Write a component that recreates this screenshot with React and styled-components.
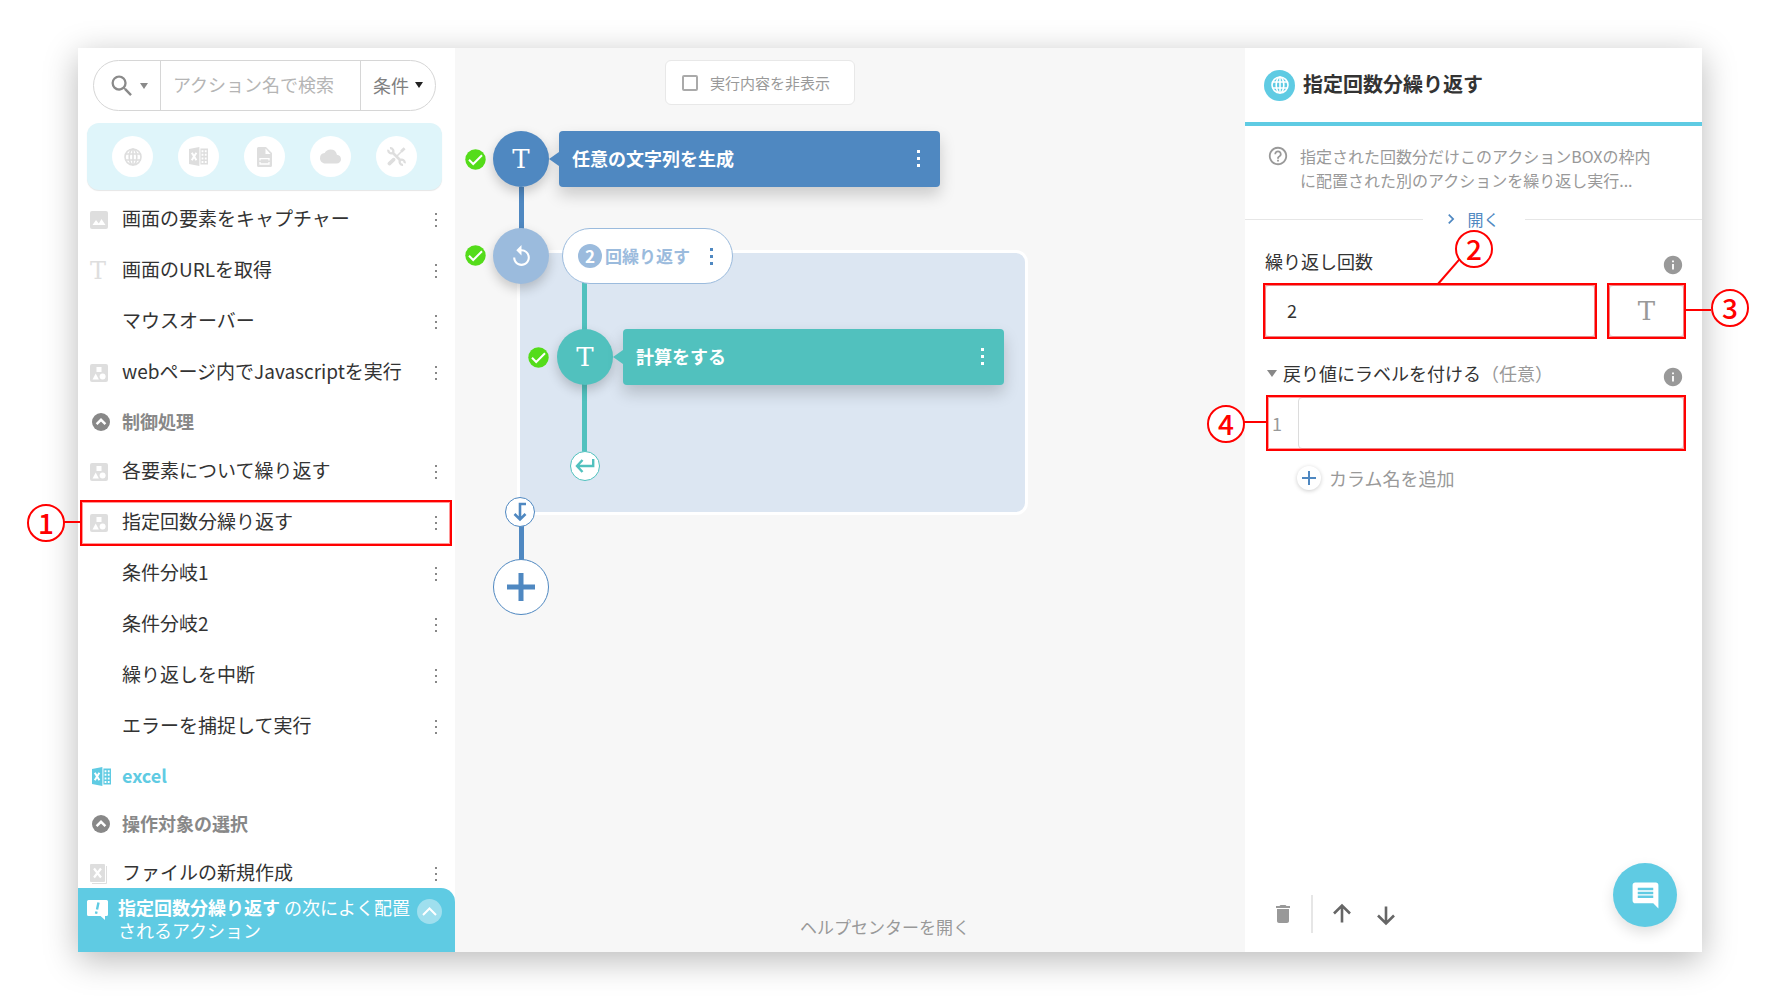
import React from "react";
import styled, { createGlobalStyle, css } from "styled-components";
import {
  MdSearch,
  MdCloud,
  MdReplay,
  MdComment,
  MdDelete,
  MdHelpOutline,
  MdInfo,
  MdChevronRight,
} from "react-icons/md";

const color = {
  cyan: "#5fcbe3",
  paleCyan: "#dff5fa",
  blue: "#4f88c1",
  lightBlue: "#9bbbdd",
  teal: "#51c1be",
  green: "#54dc1a",
  red: "#ff0000",
  text: "#333",
  gray: "#999",
  icon: "#dedede",
};

const GlobalStyle = createGlobalStyle`
  *, *::before, *::after { box-sizing: border-box; }
  body {
    margin: 0;
    background: #fff;
    color: ${color.text};
    font-family: "Noto Sans CJK JP", "Noto Sans", sans-serif;
    font-size: 18px;
    line-height: 24px;
  }
  button, input {
    margin: 0;
    padding: 0;
    border: 0;
    background: none;
    color: inherit;
    font: inherit;
  }
  button { cursor: pointer; }
  svg { display: block; flex: none; }
`;

/* ---------- shell ---------- */

const Page = styled.div`
  display: flex;
  min-height: 100vh;
  padding: 48px 77px 48px 78px;
`;

const Shell = styled.div`
  display: flex;
  flex: 1;
  background: #fff;
  box-shadow: 0 8px 32px rgba(0, 0, 0, 0.28);
`;

/* ---------- call-outs ---------- */

const Marked = styled.div`
  position: relative;
  ${(p) => p.$grow && "flex: 1;"}
`;

const Frame = styled.span`
  position: absolute;
  inset: ${(p) => p.$inset || "-2px"};
  border: 2px solid ${color.red};
  outline: 1px solid rgba(255, 0, 0, 0.4);
  outline-offset: -3px;
  pointer-events: none;
`;

const Badge = styled.span`
  position: absolute;
  left: ${(p) => p.$left}px;
  top: ${(p) => p.$top}px;
  z-index: 3;
  display: flex;
  align-items: center;
  justify-content: center;
  width: 38px;
  height: 38px;
  padding-bottom: 2px;
  border: 2px solid ${color.red};
  border-radius: 50%;
  background: #fff;
  color: ${color.red};
  font-size: 28px;
  font-weight: 500;
`;

const Lead = styled.span`
  position: absolute;
  left: ${(p) => p.$left}px;
  top: ${(p) => p.$top}px;
  width: ${(p) => p.$length}px;
  height: 2px;
  background: ${color.red};
  transform: rotate(${(p) => p.$angle || 0}deg);
  transform-origin: 0 50%;
`;

/* ---------- sidebar ---------- */

const Sidebar = styled.aside`
  position: relative;
  flex: none;
  width: 377px;
  padding-top: 12px;
`;

const SearchBar = styled.form`
  display: flex;
  height: 51px;
  margin: 0 19px 0 15px;
  border: 1px solid #d6d6d6;
  border-radius: 26px;
`;

const SearchKind = styled.button`
  display: flex;
  align-items: center;
  gap: 4px;
  width: 67px;
  padding-left: 14px;
  border-right: 1px solid #d6d6d6;
  color: #8a8a8a;
`;

const SearchInput = styled.input`
  flex: 1;
  min-width: 0;
  padding: 0 0 3px 12px;
  outline: none;
  &::placeholder { color: #b5b5b5; opacity: 1; }
`;

const Condition = styled.button`
  display: flex;
  align-items: center;
  gap: 6px;
  width: 75px;
  padding: 0 0 2px 12px;
  border-left: 1px solid #d6d6d6;
  color: #808080;
`;

const Caret = styled.span`
  border: ${(p) => p.$half || 4}px solid transparent;
  border-top: ${(p) => (p.$half || 4) + 2}px solid ${(p) => p.$color};
  border-bottom: 0;
`;

const Categories = styled.nav`
  display: flex;
  align-items: center;
  justify-content: space-between;
  height: 67px;
  margin: 12px 13px 4px 9px;
  padding: 0 25px;
  border-radius: 12px;
  background: ${color.paleCyan};
  box-shadow: 0 1px 1px rgba(0, 0, 0, 0.1);
`;

const CategoryButton = styled.button`
  display: flex;
  align-items: center;
  justify-content: center;
  width: 41px;
  height: 41px;
  border-radius: 50%;
  background: #fff;
  color: ${color.icon};
`;

const List = styled.ul`
  margin: 0;
  padding: 0;
  list-style: none;
`;

const Row = styled.li`
  position: relative;
  display: flex;
  align-items: center;
  height: 51px;
  padding: 0 14px 0 12px;
  font-size: 19px;
`;

const GroupRow = styled(Row)`
  height: 48px;
  padding-left: 14px;
  color: ${(p) => p.$color || "#888"};
  font-size: 18px;
  font-weight: 700;
`;

const RowIcon = styled.span`
  flex: none;
  width: 32px;
  color: ${color.icon};
`;

const RowLabel = styled.span`
  flex: 1;
  padding-bottom: 3px;
  white-space: nowrap;
`;

const GroupIcon = styled(RowIcon)`
  width: 30px;
  color: inherit;
`;

const Slab = styled.span`
  display: block;
  font-family: "DejaVu Serif", serif;
  font-size: ${(p) => p.$size || 26}px;
  font-weight: 400;
  line-height: 1;
`;

const MenuButton = styled.button`
  display: flex;
  flex-direction: column;
  align-items: center;
  gap: 4px;
  width: 10px;
  color: ${(p) => p.$color || "#888"};
`;

const Dot = styled.i`
  width: ${(p) => p.$size || 2}px;
  height: ${(p) => p.$size || 2}px;
  background: currentColor;
`;

const Suggestion = styled.div`
  position: absolute;
  right: 0;
  bottom: 0;
  left: 0;
  display: flex;
  align-items: flex-start;
  height: 64px;
  padding: 8px 13px 0 9px;
  border-radius: 0 14px 0 0;
  background: ${color.cyan};
  color: #fff;
  line-height: 23px;

  > svg { margin-top: 4px; }
`;

const SuggestionText = styled.p`
  flex: 1;
  margin: 0 0 0 10px;
  white-space: nowrap;
`;

const CollapseButton = styled.button`
  display: flex;
  align-items: center;
  justify-content: center;
  width: 25px;
  height: 25px;
  margin-top: 3px;
  border-radius: 50%;
  background: #9fdfee;
`;

/* ---------- canvas ---------- */

const Canvas = styled.main`
  position: relative;
  display: flex;
  flex: 1;
  flex-direction: column;
  align-items: flex-start;
  justify-content: space-between;
  min-width: 600px;
  padding: 12px 0 13px;
  background: #f7f7f7;
`;

const Toggle = styled.label`
  display: flex;
  align-items: center;
  gap: 12px;
  height: 45px;
  margin-left: 210px;
  padding: 0 24px 0 16px;
  border: 1px solid #e8e8e8;
  border-radius: 6px;
  background: #fff;
  color: ${color.gray};
  font-size: 15px;
`;

const Checkbox = styled.input`
  width: 16px;
  height: 16px;
  border: 2px solid #aaa;
  border-radius: 2px;
  appearance: none;
`;

const HelpCenter = styled.a`
  margin-left: 345px;
  color: ${color.gray};
  font-size: 17px;
  text-decoration: none;
`;

const placed = css`
  position: absolute;
  left: ${(p) => p.$x}px;
  top: ${(p) => p.$y}px;
`;

const LoopArea = styled.div`
  ${placed}
  width: 511px;
  height: 265px;
  border: 3px solid #fff;
  border-radius: 12px;
  background: #dce6f2;
`;

const Wire = styled.div`
  ${placed}
  width: 5px;
  height: ${(p) => p.$length}px;
  background: ${(p) => p.$color};
`;

const Node = styled.div`
  ${placed}
  display: flex;
  align-items: center;
  justify-content: center;
  width: 56px;
  height: 56px;
  border-radius: 50%;
  background: ${(p) => p.$color};
  box-shadow: 0 5px 12px rgba(0, 0, 0, 0.2);
  color: #fff;
`;

const Joint = styled.div`
  ${placed}
  display: flex;
  align-items: center;
  justify-content: center;
  width: 30px;
  height: 30px;
  border: 1px solid ${(p) => p.$color};
  border-radius: 50%;
  background: #fff;
  color: ${(p) => p.$color};
`;

const AddNode = styled.button`
  ${placed}
  display: flex;
  align-items: center;
  justify-content: center;
  width: 56px;
  height: 56px;
  border: 1px solid ${color.blue};
  border-radius: 50%;
  background: #fff;
  color: ${color.blue};
`;

const Done = styled.div`
  ${placed}
`;

const ActionCard = styled.div`
  ${placed}
  display: flex;
  align-items: center;
  justify-content: space-between;
  width: 381px;
  height: 56px;
  padding: 0 17px 2px 13px;
  border-radius: 4px;
  background: ${(p) => p.$color};
  box-shadow: 0 8px 16px rgba(0, 0, 0, 0.18);
  color: #fff;
  font-weight: 700;

  &::before {
    position: absolute;
    top: 21px;
    left: -10px;
    border: 7px solid transparent;
    border-right: 10px solid ${(p) => p.$color};
    border-left: 0;
    content: "";
  }
`;

const LoopPill = styled.div`
  ${placed}
  display: flex;
  align-items: center;
  gap: 3px;
  width: 171px;
  height: 56px;
  padding: 0 16px 0 15px;
  border: 1px solid ${color.lightBlue};
  border-radius: 28px;
  background: #fff;
  color: ${color.lightBlue};
  font-size: 17px;
  font-weight: 700;
  white-space: nowrap;
`;

const PillLabel = styled.span`
  flex: 1;
`;

const Count = styled.span`
  width: 24px;
  height: 24px;
  border-radius: 50%;
  background: ${color.lightBlue};
  color: #fff;
  text-align: center;
`;

/* ---------- detail panel ---------- */

const Panel = styled.section`
  display: flex;
  flex: none;
  flex-direction: column;
  width: 457px;
`;

const PanelHeader = styled.header`
  display: flex;
  align-items: center;
  gap: 8px;
  height: 78px;
  padding: 0 19px;
  border-bottom: 4px solid ${color.cyan};
`;

const PanelTitle = styled.h2`
  margin: 0;
  padding-bottom: 3px;
  font-size: 20px;
  font-weight: 700;
`;

const GlobeBadge = styled.span`
  display: flex;
  align-items: center;
  justify-content: center;
  width: 31px;
  height: 31px;
  border-radius: 50%;
  background: ${color.cyan};
  color: #fff;
`;

const Description = styled.div`
  display: flex;
  align-items: flex-start;
  gap: 11px;
  padding: 18px 20px 15px 22px;
  color: ${color.gray};
  font-size: 16px;
  white-space: nowrap;

  > svg { margin-top: 1px; }
`;

const Copy = styled.p`
  margin: 0;
`;

const Expander = styled.div`
  display: flex;
  align-items: center;
  height: 24px;

  &::before,
  &::after {
    flex: 1;
    height: 1px;
    background: #e6e6e6;
    content: "";
  }
`;

const ExpandButton = styled.button`
  display: flex;
  align-items: center;
  gap: 7px;
  width: 102px;
  padding-left: 18px;
  color: ${color.blue};
  font-size: 16px;
`;

const Fields = styled.div`
  flex: 1;
  padding: 18px 18px 0 20px;
`;

const FieldHead = styled.div`
  display: flex;
  align-items: center;
  justify-content: space-between;
  height: 32px;
  margin-bottom: 4px;
  color: ${color.gray};
`;

const FieldLabel = styled.label`
  padding-bottom: 8px;
  color: ${color.text};
`;

const Disclosure = styled.button`
  display: flex;
  align-items: center;
  gap: 6px;
  padding: 0 0 8px 2px;
  color: ${color.text};
`;

const Optional = styled.span`
  color: ${color.gray};
`;

const FieldLine = styled.div`
  display: flex;
  gap: 14px;
  margin-bottom: 24px;
`;

const TextInput = styled.input`
  display: block;
  width: 100%;
  height: 52px;
  padding: 0 0 3px 21px;
  border: 1px solid #dcdcdc;
  border-radius: 4px;
  background: #fff;
  outline: none;
`;

const TypeButton = styled.button`
  display: flex;
  align-items: center;
  justify-content: center;
  width: 75px;
  height: 52px;
  border: 1px solid #dcdcdc;
  border-radius: 4px;
  color: ${color.gray};
`;

const NumberedField = styled.div`
  position: relative;
  display: flex;
  align-items: center;
  gap: 16px;
  padding-left: 7px;
  color: ${color.gray};
`;

const AddColumn = styled.button`
  display: flex;
  align-items: center;
  gap: 8px;
  margin: 17px 0 0 32px;
  color: ${color.gray};
`;

const PlusBadge = styled.span`
  display: flex;
  align-items: center;
  justify-content: center;
  width: 24px;
  height: 24px;
  border-radius: 50%;
  box-shadow: 0 1px 4px rgba(0, 0, 0, 0.2);
  color: ${color.blue};
`;

const PanelFooter = styled.footer`
  display: flex;
  align-items: center;
  justify-content: space-between;
  padding: 0 25px 19px 26px;
`;

const Tools = styled.div`
  display: flex;
  align-items: center;
  gap: 16px;
  margin-top: 38px;
  color: #666;
`;

const Arrows = styled.div`
  display: flex;
  gap: 18px;
`;

const ToolButton = styled.button`
  color: ${(p) => p.$color || "inherit"};
`;

const Separator = styled.span`
  width: 2px;
  height: 38px;
  background: #e6e6e6;
`;

const ChatButton = styled.button`
  display: flex;
  align-items: center;
  justify-content: center;
  width: 64px;
  height: 64px;
  border-radius: 50%;
  background: ${color.cyan};
  box-shadow: 0 6px 14px rgba(0, 0, 0, 0.12);
  color: #fff;
`;

/* ---------- icons ---------- */

const Globe = ({ size = 18 }) => (
  <svg width={size} height={size} viewBox="0 0 18 18" fill="none" stroke="currentColor" strokeWidth="1.6">
    <circle cx="9" cy="9" r="8" />
    <ellipse cx="9" cy="9" rx="3.8" ry="8" />
    <path d="M9 1v16M1.8 6h14.4M1.8 12h14.4" />
  </svg>
);

const Excel = ({ size = 19 }) => (
  <svg width={size} height={size} viewBox="0 0 19 19">
    <path fill="currentColor" d="M0 2 10.400 0v19L0 17z" />
    <path fill="none" stroke="#fff" strokeWidth="2" d="m2.800 5.800 4.600 7.400M7.400 5.800l-4.600 7.400" />
    <path
      fill="currentColor"
      fillRule="evenodd"
      d="M11.400 1.500H19v16h-7.600zM12.600 3.200v2h1.800v-2zM15.800 3.200v2h1.800v-2zM12.600 6.800v2h1.800v-2zM15.800 6.800v2h1.800v-2zM12.600 10.400v2h1.800v-2zM15.800 10.400v2h1.800v-2zM12.600 14v2h1.800v-2zM15.800 14v2h1.800v-2z"
    />
  </svg>
);

const Document = () => (
  <svg width="15" height="20" viewBox="0 0 15 20">
    <path fill="currentColor" d="M1.500 0H9l6 6v12.500a1.500 1.500 0 0 1-1.500 1.500h-12A1.500 1.500 0 0 1 0 18.500v-17A1.500 1.500 0 0 1 1.500 0z" />
    <path fill="#fff" d="M8.500 1.500 13.500 7h-5z" />
    <path fill="none" stroke="#fff" strokeWidth="1.300" d="M3 13.600v-2h9v2M3 15v2h9v-2" />
  </svg>
);

const ToolSet = () => (
  <svg width="19" height="19" viewBox="0 0 19 19" fill="none" stroke="currentColor">
    <path strokeWidth="2.600" d="m5 5 9 9" />
    <path strokeWidth="2.200" d="M1.300 2.800a3 3 0 0 0 4.600 3A3 3 0 0 0 3 1.200" />
    <path strokeWidth="2.200" d="M17.700 16.200a3 3 0 0 0-4.600-3 3 3 0 0 0 2.900 4.600" />
    <path strokeWidth="3.600" strokeLinecap="round" d="m2.400 16.600 4.200-4" />
    <path strokeWidth="1.600" d="m10 9 5-5" />
    <path strokeWidth="2.800" d="m14.200 4.600 3.400-3.400" />
  </svg>
);

const Picture = () => (
  <svg width="18" height="18" viewBox="0 0 18 18">
    <rect width="18" height="18" rx="2" fill="currentColor" />
    <path fill="#fff" d="m2.500 14 3.500-5 2.800 3.400 2.700-4.400 4 6z" />
  </svg>
);

const Shapes = () => (
  <svg width="18" height="18" viewBox="0 0 18 18">
    <rect width="18" height="18" rx="2" fill="currentColor" />
    <rect x="6.500" y="3" width="5" height="5" fill="#fff" />
    <path fill="#fff" d="m5.700 9.400 3.200 6H2.500z" />
    <circle cx="12.600" cy="12.400" r="3" fill="#fff" />
  </svg>
);

const Workbook = () => (
  <svg width="17" height="20" viewBox="0 0 17 20">
    <rect width="15" height="18" rx="1" fill="currentColor" />
    <path fill="none" stroke="currentColor" strokeWidth="1" d="M16.500 2v17.500H2" />
    <path fill="none" stroke="#fff" strokeWidth="2.200" d="m4 4.500 7 9M11 4.500l-7 9" />
  </svg>
);

const FoldMark = () => (
  <svg width="18" height="18" viewBox="0 0 18 18">
    <circle cx="9" cy="9" r="9" fill="currentColor" />
    <path fill="none" stroke="#fff" strokeWidth="2.400" d="m4.600 11.200 4.400-4.400 4.400 4.400" />
  </svg>
);

const Notice = () => (
  <svg width="21" height="20" viewBox="0 0 21 20">
    <path fill="#fff" d="M1.500 0h18A1.500 1.500 0 0 1 21 1.500v13a1.500 1.500 0 0 1-1.500 1.500H18v4l-4.500-4h-12A1.500 1.500 0 0 1 0 14.500v-13A1.500 1.500 0 0 1 1.500 0z" />
    <path fill="none" stroke={color.cyan} strokeWidth="2.400" d="M11.500 2.500 10 9.500M9.500 11.500 9 13.800" />
  </svg>
);

const Tick = () => (
  <svg width="21" height="21" viewBox="0 0 21 21">
    <circle cx="10.500" cy="10.500" r="10.200" fill={color.green} />
    <path fill="none" stroke="#fff" strokeWidth="2" d="m4 10.800 4.200 4.200 8.800-8.800" />
  </svg>
);

const CollapseMark = () => (
  <svg width="15" height="9" viewBox="0 0 15 9" fill="none" stroke="#fff" strokeWidth="2">
    <path d="m1 8 6.500-6.500L14 8" />
  </svg>
);

const BackArrow = () => (
  <svg width="20" height="14" viewBox="0 0 20 14" fill="none" stroke="currentColor" strokeWidth="2.400">
    <path d="M18.200 0v7H2.500M7.500 1 2 7l5.500 6" />
  </svg>
);

const DownArrow = () => (
  <svg width="14" height="20" viewBox="0 0 14 20" fill="none" stroke="currentColor" strokeWidth="2.600">
    <path d="M13 2H7v15M1.500 12 7 17.500 12.500 12" />
  </svg>
);

const MoveUp = () => (
  <svg width="26" height="26" viewBox="0 0 26 26" fill="none" stroke="currentColor" strokeWidth="2.600">
    <path d="M13 21.500V4.500M5 12.500l8-8 8 8" />
  </svg>
);

const MoveDown = () => (
  <svg width="26" height="26" viewBox="0 0 26 26" fill="none" stroke="currentColor" strokeWidth="2.600">
    <path d="M13 5.500v17M5 14.500l8 8 8-8" />
  </svg>
);

const Plus = ({ size, weight }) => (
  <svg width={size} height={size} viewBox={`0 0 ${size} ${size}`} stroke="currentColor" strokeWidth={weight}>
    <path d={`M${size / 2} 0v${size}M0 ${size / 2}h${size}`} />
  </svg>
);

/* ---------- content ---------- */

const categories = [
  ["ブラウザ", <Globe key="i" />],
  ["excel", <Excel key="i" />],
  ["ファイル", <Document key="i" />],
  ["クラウド", <MdCloud key="i" size={21} />],
  ["ツール", <ToolSet key="i" />],
];

const actions = [
  { label: "画面の要素をキャプチャー", icon: <Picture /> },
  { label: "画面のURLを取得", icon: <Slab $size={24}>T</Slab> },
  { label: "マウスオーバー" },
  { label: "webページ内でJavascriptを実行", icon: <Shapes /> },
  { label: "制御処理", group: true, icon: <FoldMark /> },
  { label: "各要素について繰り返す", icon: <Shapes /> },
  { label: "指定回数分繰り返す", icon: <Shapes />, callout: 1 },
  { label: "条件分岐1" },
  { label: "条件分岐2" },
  { label: "繰り返しを中断" },
  { label: "エラーを捕捉して実行" },
  { label: "excel", group: true, icon: <Excel />, tint: color.cyan },
  { label: "操作対象の選択", group: true, icon: <FoldMark /> },
  { label: "ファイルの新規作成", icon: <Workbook /> },
];

const Menu = ({ dot, ...props }) => (
  <MenuButton type="button" aria-label="メニュー" {...props}>
    <Dot $size={dot} />
    <Dot $size={dot} />
    <Dot $size={dot} />
  </MenuButton>
);

const Action = ({ item }) => {
  if (item.group) {
    return (
      <GroupRow $color={item.tint}>
        <GroupIcon>{item.icon}</GroupIcon>
        <RowLabel>{item.label}</RowLabel>
      </GroupRow>
    );
  }
  return (
    <Row>
      <RowIcon>{item.icon}</RowIcon>
      <RowLabel>{item.label}</RowLabel>
      <Menu />
      {item.callout && (
        <>
          <Frame $inset="3px 3px 2px 2px" />
          <Lead $left={-15} $top={24} $length={18} />
          <Badge $left={-51} $top={7}>{item.callout}</Badge>
        </>
      )}
    </Row>
  );
};

export default function App() {
  return (
    <Page>
      <GlobalStyle />
      <Shell>
        <Sidebar>
          <SearchBar onSubmit={(e) => e.preventDefault()}>
            <SearchKind type="button" aria-label="検索対象">
              <MdSearch size={28} />
              <Caret $color="#8a8a8a" />
            </SearchKind>
            <SearchInput aria-label="アクション名で検索" placeholder="アクション名で検索" />
            <Condition type="button">
              条件
              <Caret $color="#222" />
            </Condition>
          </SearchBar>
          <Categories>
            {categories.map(([name, icon]) => (
              <CategoryButton key={name} type="button" aria-label={name}>
                {icon}
              </CategoryButton>
            ))}
          </Categories>
          <List>
            {actions.map((item) => (
              <Action key={item.label} item={item} />
            ))}
          </List>
          <Suggestion>
            <Notice />
            <SuggestionText>
              <b>指定回数分繰り返す</b>
              <span> の次によく配置</span>
              <br />
              <span>されるアクション</span>
            </SuggestionText>
            <CollapseButton type="button" aria-label="展開">
              <CollapseMark />
            </CollapseButton>
          </Suggestion>
        </Sidebar>

        <Canvas>
          <Toggle>
            <Checkbox type="checkbox" />
            実行内容を非表示
          </Toggle>

          <LoopArea $x={62} $y={202} />
          <Wire $x={64} $y={139} $length={44} $color={color.blue} />
          <Wire $x={127} $y={230} $length={176} $color={color.teal} />
          <Wire $x={64} $y={478} $length={36} $color={color.blue} />

          <Done $x={10} $y={101}><Tick /></Done>
          <Node $x={38} $y={83} $color={color.blue}><Slab>T</Slab></Node>
          <ActionCard $x={104} $y={83} $color={color.blue}>
            任意の文字列を生成
            <Menu $color="#fff" dot={3} />
          </ActionCard>

          <Done $x={10} $y={197}><Tick /></Done>
          <Node $x={38} $y={180} $color={color.lightBlue}><MdReplay size={25} /></Node>
          <LoopPill $x={107} $y={180}>
            <Count>2</Count>
            <PillLabel>回繰り返す</PillLabel>
            <Menu $color={color.blue} dot={3} />
          </LoopPill>

          <Done $x={73} $y={299}><Tick /></Done>
          <Node $x={102} $y={281} $color={color.teal}><Slab>T</Slab></Node>
          <ActionCard $x={168} $y={281} $color={color.teal}>
            計算をする
            <Menu $color="#fff" dot={3} />
          </ActionCard>

          <Joint $x={115} $y={403} $color={color.teal}><BackArrow /></Joint>
          <Joint $x={50} $y={449} $color={color.blue}><DownArrow /></Joint>
          <AddNode type="button" aria-label="アクションを追加" $x={38} $y={511}>
            <Plus size={28} weight={5} />
          </AddNode>

          <HelpCenter href="#help">ヘルプセンターを開く</HelpCenter>
        </Canvas>

        <Panel>
          <PanelHeader>
            <GlobeBadge><Globe /></GlobeBadge>
            <PanelTitle>指定回数分繰り返す</PanelTitle>
          </PanelHeader>
          <Description>
            <MdHelpOutline size={22} />
            <Copy>
              指定された回数分だけこのアクションBOXの枠内
              <br />
              に配置された別のアクションを繰り返し実行...
            </Copy>
          </Description>
          <Expander>
            <ExpandButton type="button">
              <MdChevronRight size={20} />
              開く
            </ExpandButton>
          </Expander>

          <Fields>
            <FieldHead>
              <FieldLabel htmlFor="repeat-count">繰り返し回数</FieldLabel>
              <MdInfo size={22} />
            </FieldHead>
            <FieldLine>
              <Marked $grow>
                <TextInput id="repeat-count" defaultValue="2" />
                <Frame />
                <Lead $left={173} $top={-2} $length={34} $angle={-49} />
                <Badge $left={190} $top={-55}>2</Badge>
              </Marked>
              <Marked>
                <TypeButton type="button" aria-label="文字列">
                  <Slab>T</Slab>
                </TypeButton>
                <Frame />
                <Lead $left={76} $top={24} $length={26} />
                <Badge $left={102} $top={4}>3</Badge>
              </Marked>
            </FieldLine>

            <FieldHead>
              <Disclosure type="button">
                <Caret $color="#888" $half={5} />
                <span>
                  戻り値にラベルを付ける<Optional>（任意）</Optional>
                </span>
              </Disclosure>
              <MdInfo size={22} />
            </FieldHead>
            <NumberedField>
              <label htmlFor="column-1">1</label>
              <TextInput id="column-1" />
              <Frame $inset="-2px -2px -2px 1px" />
              <Lead $left={-21} $top={24} $length={24} />
              <Badge $left={-58} $top={8}>4</Badge>
            </NumberedField>
            <AddColumn type="button">
              <PlusBadge><Plus size={14} weight={2} /></PlusBadge>
              カラム名を追加
            </AddColumn>
          </Fields>

          <PanelFooter>
            <Tools>
              <ToolButton type="button" aria-label="削除" $color="#999"><MdDelete size={24} /></ToolButton>
              <Separator />
              <Arrows>
                <ToolButton type="button" aria-label="上へ"><MoveUp /></ToolButton>
                <ToolButton type="button" aria-label="下へ"><MoveDown /></ToolButton>
              </Arrows>
            </Tools>
            <ChatButton type="button" aria-label="チャット"><MdComment size={31} /></ChatButton>
          </PanelFooter>
        </Panel>
      </Shell>
    </Page>
  );
}
